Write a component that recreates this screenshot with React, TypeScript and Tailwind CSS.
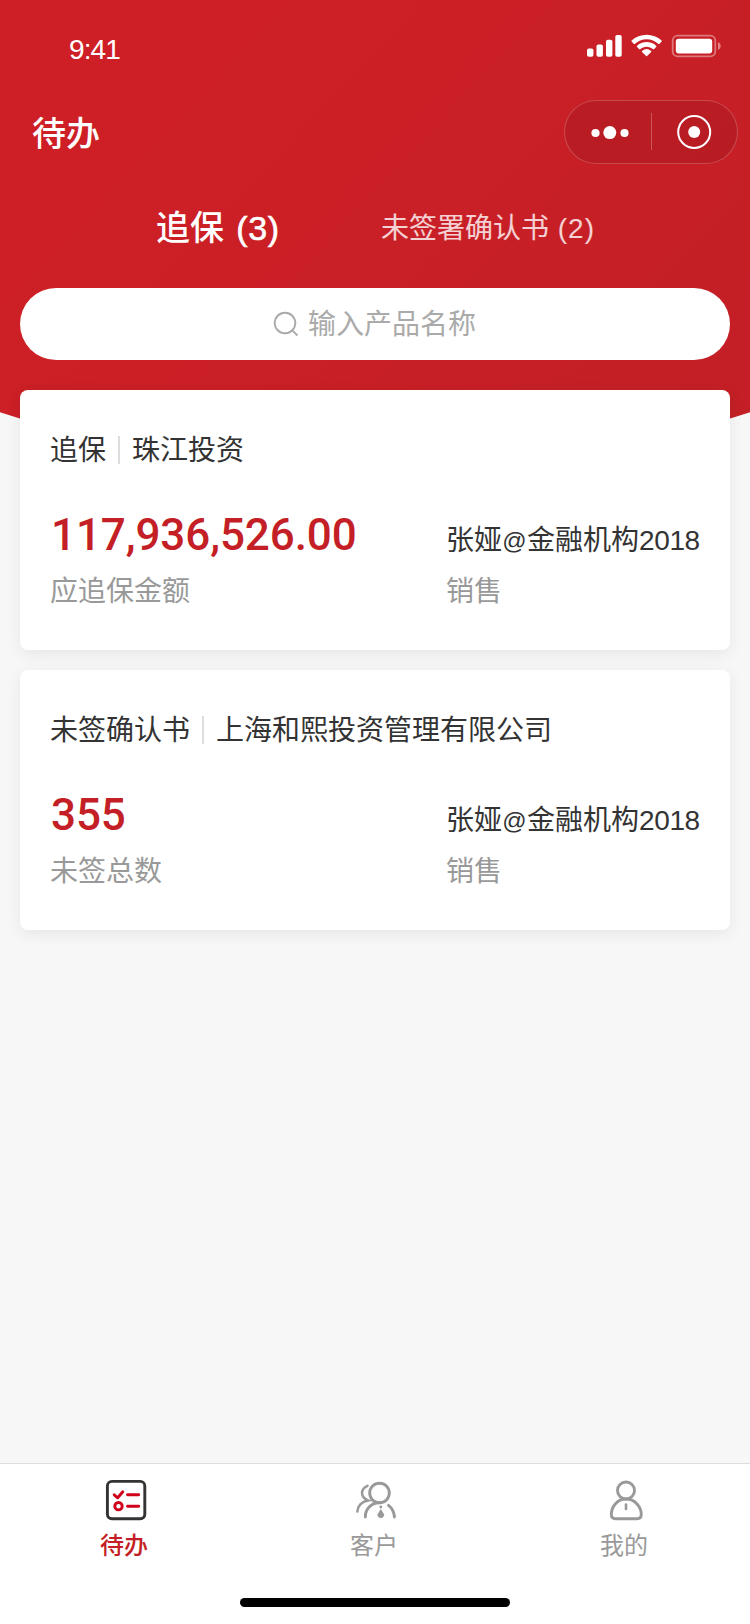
import type { ReactNode } from "react";

type Todo = {
  kind: string;
  company: string;
  value: string;
  label: string;
};

const todos: Todo[] = [
  { kind: "追保", company: "珠江投资", value: "117,936,526.00", label: "应追保金额" },
  { kind: "未签确认书", company: "上海和熙投资管理有限公司", value: "355", label: "未签总数" },
];

function StatusBar() {
  return (
    <div className="flex h-[88px] items-start justify-between pr-[29px] pl-[69px] text-white">
      <span className="mt-[33px] text-[28px] leading-[34px] tracking-[-0.9px]">9:41</span>
      <svg className="mt-[34px] h-[24px] w-[135px]" viewBox="586 34 135 24" fill="none">
        <g fill="#fff">
          <rect x="587" y="48.5" width="6.4" height="8.2" rx="1.8" />
          <rect x="596.5" y="44.5" width="6.4" height="12.2" rx="1.8" />
          <rect x="606" y="39.7" width="6.4" height="17" rx="1.8" />
          <rect x="615.3" y="35" width="6.4" height="21.7" rx="1.8" />
          <path d="M646.6 39.2c4.4 0 8.600 1.700 11.800 4.700.25.23.64.23.88-.01l2.330-2.350c.26-.26.26-.68-.01-.93a21.9 21.9 0 0 0-30 0c-.27.25-.27.67-.01.93l2.330 2.350c.24.24.63.24.88.01 3.200-3 7.400-4.700 11.800-4.700z" />
          <path d="M646.6 46.700c2.400 0 4.700.9 6.500 2.500.25.22.63.22.87-.02l2.330-2.350c.26-.26.26-.69-.02-.94a14.300 14.300 0 0 0-19.360 0c-.28.25-.28.68-.02.94l2.330 2.350c.24.24.62.24.87.02 1.800-1.600 4.100-2.500 6.500-2.500z" />
          <path d="M651.200 51.900c.26-.26.25-.69-.04-.92a7.200 7.200 0 0 0-9.120 0c-.29.23-.3.660-.04.920l4.130 4.180c.26.26.680.26.940 0z" />
          <rect x="675.800" y="38.700" width="36.400" height="14.700" rx="2.800" />
        </g>
        <rect x="672.700" y="35.700" width="42.600" height="20.700" rx="5" stroke="#fff" strokeOpacity=".4" strokeWidth="1.800" />
        <path d="M718 42v8c1.600-.7 2.700-2.200 2.700-4s-1.100-3.300-2.700-4z" fill="#fff" fillOpacity=".45" />
      </svg>
    </div>
  );
}

function Capsule() {
  return (
    <div className="-mt-[2px] flex h-[64px] w-[174px] items-center rounded-full border border-white/20 bg-black/[0.07]">
      <svg className="h-[62px] w-[172px]" viewBox="564.5 101 172 62" fill="#fff">
        <circle cx="595" cy="133" r="4.100" />
        <circle cx="609.300" cy="132.600" r="6.500" />
        <circle cx="624" cy="133" r="4.100" />
        <rect x="650.500" y="113" width="1" height="37" fillOpacity=".25" />
        <circle cx="693.700" cy="132" r="16" fill="none" stroke="#fff" strokeWidth="2" />
        <circle cx="693.700" cy="132" r="6" />
      </svg>
    </div>
  );
}

function TodoCard({ kind, company, value, label }: Todo) {
  return (
    <article className="h-[260px] rounded-lg bg-white px-[30px] pt-[41px] shadow-[0_4px_16px_rgba(0,0,0,0.07)]">
      <h2 className="flex h-10 items-center text-[28px] leading-10 text-[#333]">
        <span>{kind}</span>
        <span className="-mt-[2px] mr-[12px] ml-[12px] h-[28px] w-[2px] bg-[#ddd]" />
        <span>{company}</span>
      </h2>
      <div className="mt-[39px] flex">
        <div className="w-[396px]">
          <p className="h-[50px] pl-px font-['Roboto'] text-[44px] leading-[50px] font-medium tracking-[-0.1px] text-[#c41f26]">
            {value}
          </p>
          <p className="mt-[12px] text-[28px] leading-10 text-[#999]">{label}</p>
        </div>
        <div className="flex-1">
          <p className="mt-[11px] flex h-10 text-[28px] leading-10 whitespace-nowrap text-[#333]">
            <span>张娅</span>
            <span className="w-[25px] text-center text-[24px]">@</span>
            <span>金融机构</span>
            <span className="tracking-[-0.4px]">2018</span>
          </p>
          <p className="mt-[11px] text-[28px] leading-10 text-[#999]">销售</p>
        </div>
      </div>
    </article>
  );
}

function TabItem({ label, active, children }: { label: string; active?: boolean; children: ReactNode }) {
  return (
    <div className="flex flex-1 flex-col items-center pt-[14px]">
      <svg className="h-[44px] w-[44px]" viewBox="0 0 44 44" fill="none" strokeLinecap="round">
        {children}
      </svg>
      <span
        className={
          active
            ? "mt-[7px] -ml-[2px] text-[24px] leading-[34px] font-medium text-[#c41f26]"
            : "mt-[7px] -ml-[2px] text-[24px] leading-[34px] text-[#999]"
        }
      >
        {label}
      </span>
    </div>
  );
}

export default function App() {
  return (
    <div className="relative flex h-[1624px] w-[750px] flex-col overflow-hidden bg-[#f7f7f7] font-['Liberation_Sans','Noto_Sans_CJK_SC',sans-serif]">
      <svg className="absolute top-0 left-0 h-[460px] w-[750px]" viewBox="0 0 750 460">
        <defs>
          <linearGradient id="red" gradientUnits="userSpaceOnUse" x1="130" y1="0" x2="620" y2="460">
            <stop offset="0" stopColor="#cf1f26" />
            <stop offset="1" stopColor="#c41f26" />
          </linearGradient>
        </defs>
        <path d="M0 0H750V412.300L700 428Q375 520 50 428L0 412.300z" fill="url(#red)" />
      </svg>

      <header className="relative h-[390px] text-white">
        <StatusBar />
        <div className="flex h-[90px] items-center justify-between pr-[12px] pl-[32px]">
          <h1 className="mt-[2px] text-[34px] leading-[48px] font-medium">待办</h1>
          <Capsule />
        </div>
        <nav className="flex h-[110px] items-start whitespace-nowrap">
          <span className="mt-[26px] ml-[156px] w-[225px] text-[34px] leading-[48px] font-medium">
            追保<span className="ml-[2px] tracking-[0.7px] [-webkit-text-stroke:0.6px_white]"> (3)</span>
          </span>
          <span className="mt-[31px] text-[28px] leading-10 text-white/80">
            未签署确认书<span className="tracking-[1px]"> (2)</span>
          </span>
        </nav>
        <div className="mx-5 flex h-[72px] items-center rounded-full bg-white pl-[253px] text-[#aaa]">
          <svg className="h-[26px] w-[26px]" viewBox="0 0 26 26" fill="none" stroke="#aaa" strokeWidth="1.900">
            <circle cx="12" cy="12" r="10.300" />
            <path d="M19.300 19.300 24.500 24.500" />
          </svg>
          <span className="mt-[2px] ml-[9px] text-[28px] leading-10">输入产品名称</span>
        </div>
      </header>

      <main className="relative flex flex-1 flex-col gap-5 px-5">
        {todos.map((todo) => (
          <TodoCard key={todo.kind} {...todo} />
        ))}
      </main>

      <footer className="h-[161px] border-t border-[#ddd] bg-white">
        <div className="flex h-[134px]">
          <TabItem label="待办" active>
            <rect x="4.400" y="3.400" width="37.400" height="37.400" rx="4.500" stroke="#333" strokeWidth="2.900" />
            <g stroke="#d0021b" strokeWidth="2.900" strokeLinejoin="round">
              <path d="M11.200 16.800 14.700 19.800 19.800 13.800M24.500 16.800H35.700M24.500 28.200H35.700" />
              <circle cx="15.500" cy="28.200" r="3.700" />
            </g>
          </TabItem>
          <TabItem label="客户">
            <g stroke="#999" strokeWidth="2.900">
              <circle cx="26.500" cy="15" r="9.800" />
              <path d="M12.300 39C12.300 31 18 25 26 24.800M35.500 27.300C39 30 41 34 41.500 39" />
              <path d="M14.500 7.800C7.300 11 7 19 15 22.500C8.500 23.500 4.500 28 4.400 33.500" strokeWidth="2.500" />
            </g>
            <g fill="#999">
              <circle cx="27.800" cy="29" r="1.400" />
              <path d="M27.800 31 31 36.300C31.800 41.400 23.800 41.400 24.600 36.300z" />
            </g>
          </TabItem>
          <TabItem label="我的">
            <g stroke="#999" strokeWidth="2.900">
              <circle cx="23" cy="12.500" r="8.500" />
              <path d="M23 21C14 21 8.300 29 8.300 36.500Q8.300 40.700 12.500 40.700H34Q38.300 40.700 38.300 36.500C38.300 29 32 21 23 21z" />
              <path d="M23 26.500V31" strokeWidth="2.600" />
            </g>
          </TabItem>
        </div>
        <div className="mx-auto h-[9px] w-[270px] rounded-full bg-black" />
      </footer>
    </div>
  );
}
